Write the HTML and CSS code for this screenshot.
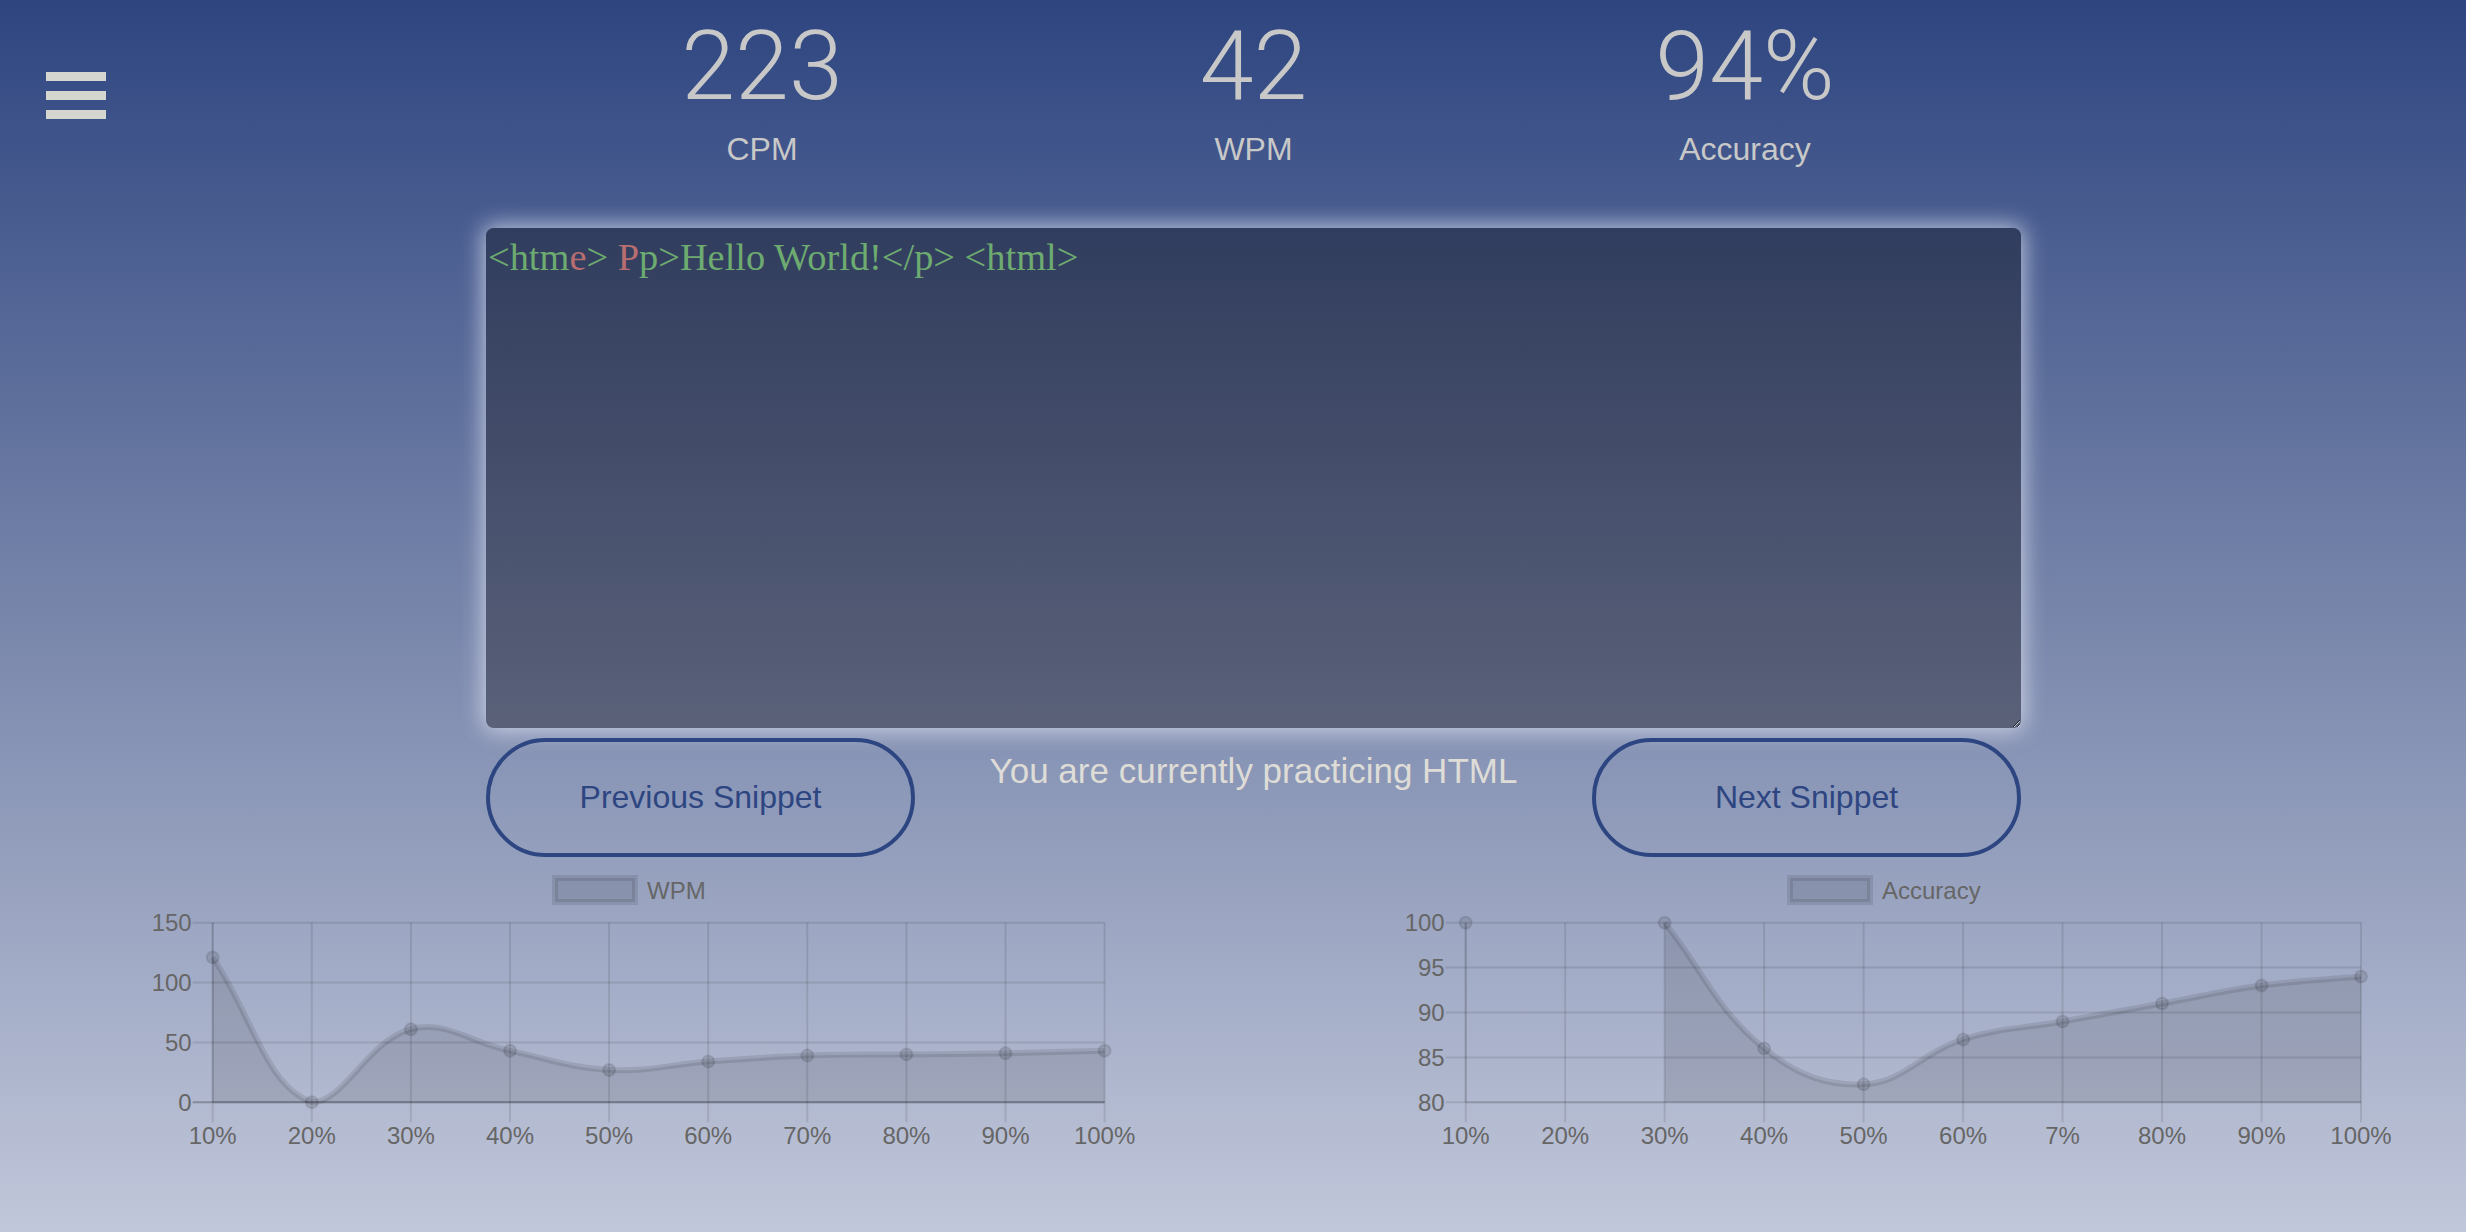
FILE: index.html
```html
<!DOCTYPE html>
<html lang="en">
<head>
<meta charset="utf-8">
<title>Typing Practice</title>
<link rel="stylesheet" href="styles.css">
</head>
<body>
<button class="menu-toggle" aria-label="Menu"><span></span><span></span><span></span></button>
<main class="main">
  <section class="stats">
    <div class="stat"><div class="stat-value">223</div><div class="stat-label">CPM</div></div>
    <div class="stat"><div class="stat-value">42</div><div class="stat-label">WPM</div></div>
    <div class="stat"><div class="stat-value">94%</div><div class="stat-label">Accuracy</div></div>
  </section>
  <div class="editor"><span class="ok">&lt;htm</span><span class="err">e</span><span class="ok">&gt; </span><span class="err">P</span><span class="ok">p&gt;Hello World!&lt;/p&gt; &lt;html&gt;</span></div>
  <div class="controls">
    <button class="btn">Previous Snippet</button>
    <p class="status">You are currently practicing HTML</p>
    <button class="btn">Next Snippet</button>
  </div>
</main>
<section class="charts">
  <svg id="wpmChart" class="chart" width="1020" height="300" viewBox="0 0 1020 300"></svg>
  <svg id="accChart" class="chart" width="1020" height="300" viewBox="0 0 1020 300"></svg>
</section>
<script src="script.js"></script>
</body>
</html>
```
FILE: styles.css
```css
html, body {
  margin: 0;
  padding: 0;
}
body {
  width: 2466px;
  height: 1232px;
  overflow: hidden;
  position: relative;
  background: linear-gradient(to bottom, #2e4580 0%, #7886ab 50%, #c1c7da 100%);
  font-family: "Liberation Sans", Arial, sans-serif;
}
.menu-toggle {
  position: absolute;
  left: 46px;
  top: 72px;
  width: 60px;
  padding: 0;
  border: 0;
  background: none;
  display: flex;
  flex-direction: column;
  gap: 10px;
}
.menu-toggle span {
  display: block;
  height: 9px;
  background: #d6d6d0;
}
.main {
  margin-left: 486px;
  width: 1535px;
}
.stats {
  padding-top: 10px;
  display: grid;
  grid-template-columns: repeat(3, 491.5px);
  justify-content: center;
  text-align: center;
  color: #c8c8c8;
}
.stat-value {
  font-family: Roboto, "Liberation Sans", sans-serif;
  font-weight: 300;
  font-size: 97px;
  line-height: 112px;
}
.stat-label {
  margin-top: 7px;
  font-size: 32px;
  line-height: 40px;
}
.editor {
  margin-top: 59px;
  box-sizing: border-box;
  width: 1535px;
  height: 500px;
  padding: 7px 2px;
  border-radius: 8px;
  background: linear-gradient(to bottom, #313d5e, #5a6179);
  box-shadow: 0 0 22px 3px rgba(232, 236, 250, 0.7);
  font-family: "Liberation Serif", "Times New Roman", serif;
  font-size: 38.4px;
  line-height: 44px;
  white-space: pre-wrap;
  resize: both;
  overflow: hidden;
}
.ok { color: #6dab70; }
.err { color: #b76e70; }
.controls {
  margin-top: 10px;
  display: flex;
  align-items: flex-start;
}
.btn {
  box-sizing: border-box;
  width: 429px;
  height: 119px;
  border: 4px solid #2d4681;
  border-radius: 60px;
  background: transparent;
  color: #2d4681;
  font-family: "Liberation Sans", Arial, sans-serif;
  font-size: 32px;
}
.status {
  flex: 1;
  margin: 13px 0 0;
  text-align: center;
  font-size: 35px;
  line-height: 40px;
  color: #dedcd6;
}
.charts {
  margin-top: 3px;
  padding-left: 119px;
  display: flex;
  gap: 236px;
}
.chart {
  display: block;
}
.chart-text {
  font-family: "Liberation Sans", Arial, sans-serif;
  font-size: 24px;
  fill: #666;
}
```
FILE: script.js
```js
(function () {
  var NS = 'http://www.w3.org/2000/svg';
  var GRID = 'rgba(0,0,0,0.1)';
  var ZERO = 'rgba(0,0,0,0.25)';
  var FILL = 'rgba(0,0,0,0.1)';

  function el(tag, attrs, parent, text) {
    var e = document.createElementNS(NS, tag);
    for (var k in attrs) e.setAttribute(k, attrs[k]);
    if (text !== undefined) e.textContent = text;
    parent.appendChild(e);
    return e;
  }

  function drawChart(svg, cfg) {
    var n = cfg.labels.length;
    var dx = (cfg.x1 - cfg.x0) / (n - 1);
    function X(i) { return cfg.x0 + i * dx; }
    function Y(v) { return cfg.yBot - (v - cfg.min) / (cfg.max - cfg.min) * (cfg.yBot - cfg.yTop); }

    // legend
    el('rect', { x: cfg.legendX, y: 18, width: 80, height: 24, fill: FILL, stroke: FILL, 'stroke-width': 6 }, svg);
    el('text', { x: cfg.legendX + 92, y: 38.5, 'class': 'chart-text' }, svg, cfg.legend);

    // horizontal grid + y labels
    for (var v = cfg.min; v <= cfg.max + 0.001; v += cfg.step) {
      var y = Y(v);
      el('line', { x1: cfg.x0 - 20, x2: cfg.x1, y1: y, y2: y, stroke: v === 0 ? ZERO : GRID, 'stroke-width': 2 }, svg);
      el('text', { x: cfg.x0 - 21, y: y + 8.5, 'text-anchor': 'end', 'class': 'chart-text' }, svg, String(v));
    }
    // vertical grid + x labels
    for (var i = 0; i < n; i++) {
      var x = X(i);
      el('line', { x1: x, x2: x, y1: cfg.yTop, y2: cfg.yBot + 20, stroke: GRID, 'stroke-width': 2 }, svg);
      el('text', { x: x, y: 284, 'text-anchor': 'middle', 'class': 'chart-text' }, svg, cfg.labels[i]);
    }
    // axis borders
    el('line', { x1: cfg.x0, x2: cfg.x1, y1: cfg.yBot, y2: cfg.yBot, stroke: GRID, 'stroke-width': 2 }, svg);
    el('line', { x1: cfg.x0, x2: cfg.x0, y1: cfg.yTop, y2: cfg.yBot, stroke: GRID, 'stroke-width': 2 }, svg);

    // points
    var pts = cfg.data.map(function (d, i) {
      return d === null ? { skip: true, x: X(i), y: cfg.yBot } : { skip: false, x: X(i), y: Y(d) };
    });
    var t = 0.4;
    pts.forEach(function (p, i) {
      if (p.skip) return;
      var prev = pts[i - 1] || p; if (prev.skip) prev = p;
      var next = pts[i + 1] || p; if (next.skip) next = p;
      var d01 = Math.hypot(p.x - prev.x, p.y - prev.y);
      var d12 = Math.hypot(next.x - p.x, next.y - p.y);
      var s01 = d01 / (d01 + d12), s12 = d12 / (d01 + d12);
      if (isNaN(s01)) s01 = 0; if (isNaN(s12)) s12 = 0;
      var fa = t * s01, fb = t * s12;
      p.cpPrev = { x: p.x - fa * (next.x - prev.x), y: p.y - fa * (next.y - prev.y) };
      p.cpNext = { x: p.x + fb * (next.x - prev.x), y: p.y + fb * (next.y - prev.y) };
      [p.cpPrev, p.cpNext].forEach(function (c) {
        c.y = Math.min(cfg.yBot, Math.max(cfg.yTop, c.y));
        c.x = Math.min(cfg.x1, Math.max(cfg.x0, c.x));
      });
    });

    // segments
    var segs = [], cur = [];
    pts.forEach(function (p) {
      if (p.skip) { if (cur.length) segs.push(cur); cur = []; }
      else cur.push(p);
    });
    if (cur.length) segs.push(cur);

    segs.forEach(function (s) {
      if (s.length < 2) return;
      var d = 'M' + s[0].x + ',' + s[0].y;
      for (var j = 1; j < s.length; j++) {
        d += ' C' + s[j - 1].cpNext.x + ',' + s[j - 1].cpNext.y + ' ' + s[j].cpPrev.x + ',' + s[j].cpPrev.y + ' ' + s[j].x + ',' + s[j].y;
      }
      var area = d + ' L' + s[s.length - 1].x + ',' + cfg.yBot + ' L' + s[0].x + ',' + cfg.yBot + ' Z';
      el('path', { d: area, fill: FILL, stroke: 'none' }, svg);
      el('path', { d: d, fill: 'none', stroke: FILL, 'stroke-width': 6, 'stroke-linejoin': 'round' }, svg);
    });

    pts.forEach(function (p) {
      if (p.skip) return;
      el('circle', { cx: p.x, cy: p.y, r: 6, fill: FILL, stroke: FILL, 'stroke-width': 2 }, svg);
    });
  }

  drawChart(document.getElementById('wpmChart'), {
    labels: ['10%', '20%', '30%', '40%', '50%', '60%', '70%', '80%', '90%', '100%'],
    data: [121, 0, 61, 43, 27, 34, 39, 40, 41, 43],
    min: 0, max: 150, step: 50,
    x0: 93.7, x1: 985.6, yTop: 62.7, yBot: 242.3,
    legend: 'WPM', legendX: 436
  });
  drawChart(document.getElementById('accChart'), {
    labels: ['10%', '20%', '30%', '40%', '50%', '60%', '7%', '80%', '90%', '100%'],
    data: [100, null, 100, 86, 82, 87, 89, 91, 93, 94],
    min: 80, max: 100, step: 5,
    x0: 90.7, x1: 986, yTop: 62.7, yBot: 242.3,
    legend: 'Accuracy', legendX: 415
  });
})();
```
